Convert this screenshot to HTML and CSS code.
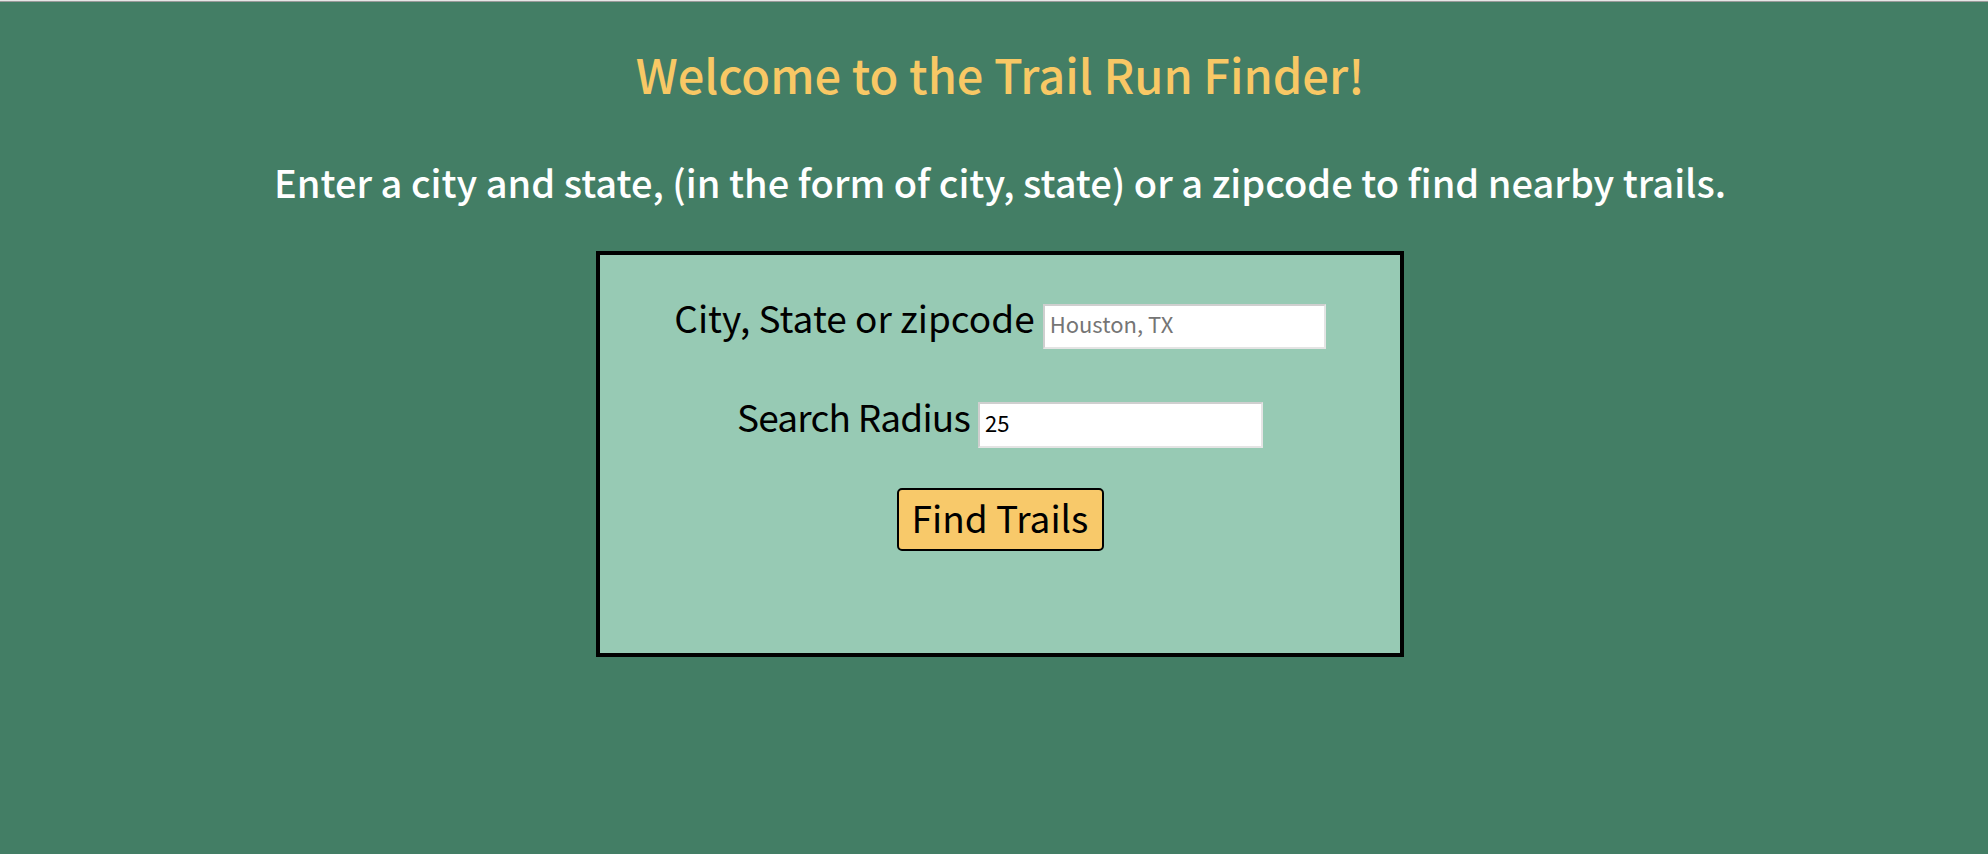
FILE: index.html
```html
<!DOCTYPE html>
<html lang="en">
<head>
<meta charset="utf-8">
<title>Trail Run Finder</title>
<link rel="stylesheet" href="styles.css">
</head>
<body>
<div class="topline"></div>
<main class="page">
  <h1 class="title">Welcome to the Trail Run Finder!</h1>
  <h2 class="subtitle">Enter a city and state, (in the form of city, state) or a zipcode to find nearby trails.</h2>
  <form class="card">
    <div class="row row-city">
      <label class="label" for="city">City, State or zipcode</label>
      <input class="field field-city" id="city" type="text" placeholder="Houston, TX">
    </div>
    <div class="row row-radius">
      <label class="label label-radius" for="radius">Search Radius</label>
      <input class="field field-radius" id="radius" type="text" value="25">
    </div>
    <div class="row row-button">
      <button class="btn" type="button">Find Trails</button>
    </div>
  </form>
</main>
</body>
</html>
```
FILE: styles.css
```css
html, body {
  margin: 0;
  padding: 0;
}
body {
  background: #437e65;
  font-family: "Noto Sans CJK JP", "Noto Sans", sans-serif;
  min-height: 854px;
}
.topline {
  height: 1px;
  background: #e6e6e6;
  border-bottom: 1px solid #9a9a9a;
}
.page {
  padding-left: 12px;
  display: flex;
  flex-direction: column;
  align-items: center;
}
.title {
  margin: 0;
  margin-top: 42px;
  font-size: 47px;
  line-height: 60px;
  font-weight: 500;
  color: #f8c865;
  text-align: center;
}
.subtitle {
  margin: 0;
  margin-top: 56px;
  font-size: 38px;
  line-height: 44px;
  font-weight: 500;
  color: #ffffff;
  text-align: center;
}
.card {
  margin-top: 47px;
  width: 808px;
  height: 406px;
  box-sizing: border-box;
  background: #97cab4;
  border: 4px solid #000;
  display: flex;
  flex-direction: column;
  align-items: center;
  padding-top: 40px;
}
.row {
  display: flex;
  align-items: baseline;
  justify-content: center;
  gap: 8px;
}
.row-radius {
  margin-top: 45px;
}
.row-button {
  margin-top: 40px;
}
.label {
  font-size: 37px;
  line-height: 45px;
  color: #000;
}
.label-radius {
  letter-spacing: -0.8px;
}
.field {
  box-sizing: border-box;
  height: 45px;
  font-family: "Noto Sans CJK JP", "Noto Sans", sans-serif;
  font-size: 22px;
  padding: 0 5px 6px;
  background: #fff;
  border: 2px solid;
  border-color: #cfcfcf #e4e4e4 #e4e4e4 #cfcfcf;
  color: #000;
}
.field::placeholder {
  color: #757575;
}
.field-city {
  width: 283px;
}
.field-radius {
  width: 285px;
  height: 46px;
}
.btn {
  box-sizing: border-box;
  width: 207px;
  height: 63px;
  background: #f8c96a;
  border: 2px solid #000;
  border-radius: 5px;
  font-family: "Noto Sans CJK JP", "Noto Sans", sans-serif;
  font-size: 37px;
  color: #000;
  padding: 0 0 8px;
}
```
